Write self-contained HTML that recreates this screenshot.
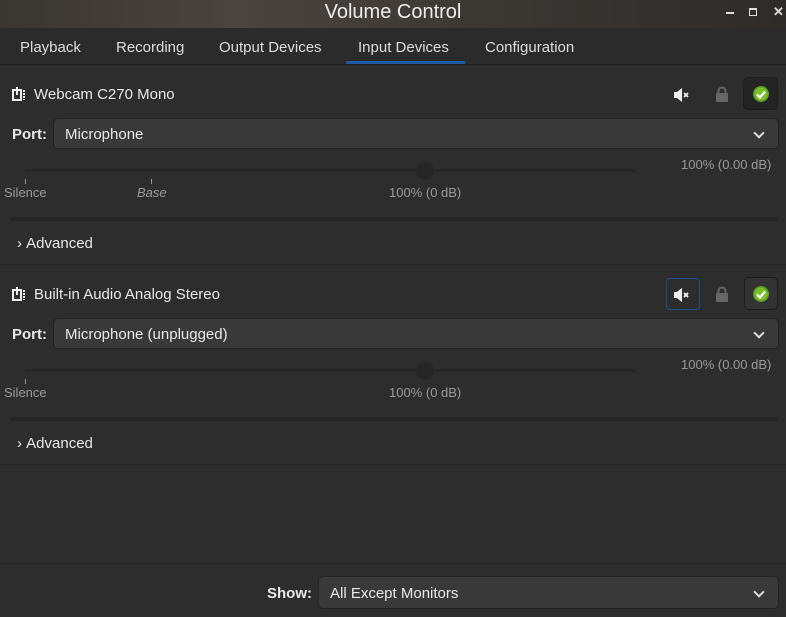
<!DOCTYPE html>
<html><head><style>
body{margin:0;width:786px;height:617px;background:#2d2d2d;font-family:"Liberation Sans",sans-serif;color:#e8e8e8;position:relative;overflow:hidden;font-size:15px}
.a{position:absolute}
.title{left:0;top:0;width:786px;height:28px;background:linear-gradient(90deg,#3a3632,#4a4440 30%,#3c3834 60%,#2e2c2a);}
.tabs{left:0;top:28px;width:786px;height:36px;background:#2b2b2b;border-bottom:1px solid #1d1d1d}
.tab{top:38px;font-size:15px;color:#ddd}
.combo{background:#393939;border:1px solid #222;border-radius:5px;height:31px;box-sizing:border-box}
.combo span{position:absolute;left:11px;top:7px}
.chev{position:absolute;right:15px;top:10px;width:6px;height:6px;border-right:2px solid #ddd;border-bottom:2px solid #ddd;transform:rotate(45deg)}
.small{font-size:13px;color:#9a9a9a}
.sep{left:10px;width:768px;height:4px;background:#262626}
.line{left:0;width:786px;height:1px;background:#262626}
.track{left:25px;width:611px;height:3px;background:#262626;border-radius:2px}
.knob{width:18px;height:18px;border-radius:50%;background:#262626}
.tick{width:1px;height:5px;background:#999}
.t{top:86px}
</style></head><body>
<div class="a title"></div>
<div class="a" style="left:0;width:786px;text-align:center;top:1px;font-size:20px;color:#eee">Volume Control</div>
<div class="a" style="left:726px;top:12px;width:8px;height:2px;background:#ddd"></div>
<div class="a" style="left:749px;top:8px;width:6px;height:5px;border:1px solid #ddd;border-top-width:2px"></div>
<div class="a" style="left:773px;top:4px;font-size:13px;font-weight:bold;color:#ddd">✕</div>
<div class="a tabs"></div>
<div class="a tab" style="left:20px;top:39px">Playback</div>
<div class="a tab" style="left:116px;top:39px">Recording</div>
<div class="a tab" style="left:219px;top:39px">Output Devices</div>
<div class="a tab" style="left:358px;top:39px">Input Devices</div>
<div class="a tab" style="left:485px;top:39px">Configuration</div>
<div class="a" style="left:346px;top:61px;width:119px;height:3px;background:#1b5aa6"></div>

<svg class="a" style="left:0;top:0" width="786" height="617">
<defs>
<g id="dev"><path d="M1 4h8v10H1z" fill="none" stroke="#eee" stroke-width="2"/><path d="M5 1v8" stroke="#eee" stroke-width="2"/><path d="M12 4v10" stroke="#eee" stroke-width="2" stroke-dasharray="2 1"/></g>
<g id="spk"><path d="M0 5h3l5-4v14l-5-4H0z" fill="#eee"/><path d="M10 6l4 4M14 6l-4 4" stroke="#eee" stroke-width="1.8"/></g>
<g id="lock"><rect x="0" y="6" width="12" height="9" rx="1" fill="#666"/><path d="M2.5 6V4a3.5 3.5 0 017 0v2" fill="none" stroke="#666" stroke-width="2"/></g>
<g id="chk"><circle cx="8" cy="8" r="8" fill="#5c9c22"/><circle cx="8" cy="8" r="6.5" fill="#7bbd2e"/><path d="M4 8.5l3 3 5-6" fill="none" stroke="#fff" stroke-width="2.2"/></g>
</defs>
<use href="#dev" x="12" y="86"/>
<use href="#spk" x="674" y="87"/>
<use href="#lock" x="716" y="87"/>
<use href="#dev" x="12" y="286"/>
<use href="#spk" x="674" y="287"/>
<use href="#lock" x="716" y="287"/>
</svg>

<div class="a" style="left:34px;top:86px">Webcam C270 Mono</div>
<div class="a" style="left:743px;top:77px;width:35px;height:33px;background:#242424;border:1px solid #1c1c1c;border-radius:5px;box-sizing:border-box"></div>
<svg class="a" style="left:753px;top:86px" width="16" height="16"><use href="#chk"/></svg>
<div class="a" style="left:12px;top:126px;font-weight:bold">Port:</div>
<div class="a combo" style="left:53px;top:118px;width:726px"><span>Microphone</span><div class="chev"></div></div>
<div class="a small" style="left:681px;top:157px">100% (0.00 dB)</div>
<div class="a track" style="top:169px"></div>
<div class="a knob" style="left:416px;top:162px"></div>
<div class="a tick" style="left:25px;top:179px"></div>
<div class="a tick" style="left:151px;top:179px"></div>
<div class="a small" style="left:4px;top:185px">Silence</div>
<div class="a small" style="left:137px;top:185px;font-style:italic">Base</div>
<div class="a small" style="left:389px;top:185px">100% (0 dB)</div>
<div class="a sep" style="top:217px"></div>
<div class="a" style="left:17px;top:235px">›&nbsp;Advanced</div>
<div class="a line" style="top:264px"></div>

<div class="a" style="left:34px;top:286px">Built-in Audio Analog Stereo</div>
<div class="a" style="left:666px;top:278px;width:34px;height:32px;border:1.5px solid #1b4f8f;border-radius:4px;box-sizing:border-box"></div>
<svg class="a" style="left:674px;top:287px" width="16" height="16"><use href="#spk"/></svg>
<div class="a" style="left:744px;top:277px;width:34px;height:33px;background:#333;border:1px solid #1c1c1c;border-radius:5px;box-sizing:border-box"></div>
<svg class="a" style="left:753px;top:286px" width="16" height="16"><use href="#chk"/></svg>
<div class="a" style="left:12px;top:326px;font-weight:bold">Port:</div>
<div class="a combo" style="left:53px;top:318px;width:726px"><span>Microphone (unplugged)</span><div class="chev"></div></div>
<div class="a small" style="left:681px;top:357px">100% (0.00 dB)</div>
<div class="a track" style="top:369px"></div>
<div class="a knob" style="left:416px;top:362px"></div>
<div class="a tick" style="left:25px;top:379px"></div>
<div class="a small" style="left:4px;top:385px">Silence</div>
<div class="a small" style="left:389px;top:385px">100% (0 dB)</div>
<div class="a sep" style="top:417px"></div>
<div class="a" style="left:17px;top:435px">›&nbsp;Advanced</div>
<div class="a line" style="top:464px"></div>

<div class="a line" style="top:563px"></div>
<div class="a" style="left:267px;top:585px;font-weight:bold">Show:</div>
<div class="a combo" style="left:318px;top:576px;width:461px;height:33px"><span style="top:8px">All Except Monitors</span><div class="chev" style="top:11px"></div></div>
</body></html>
